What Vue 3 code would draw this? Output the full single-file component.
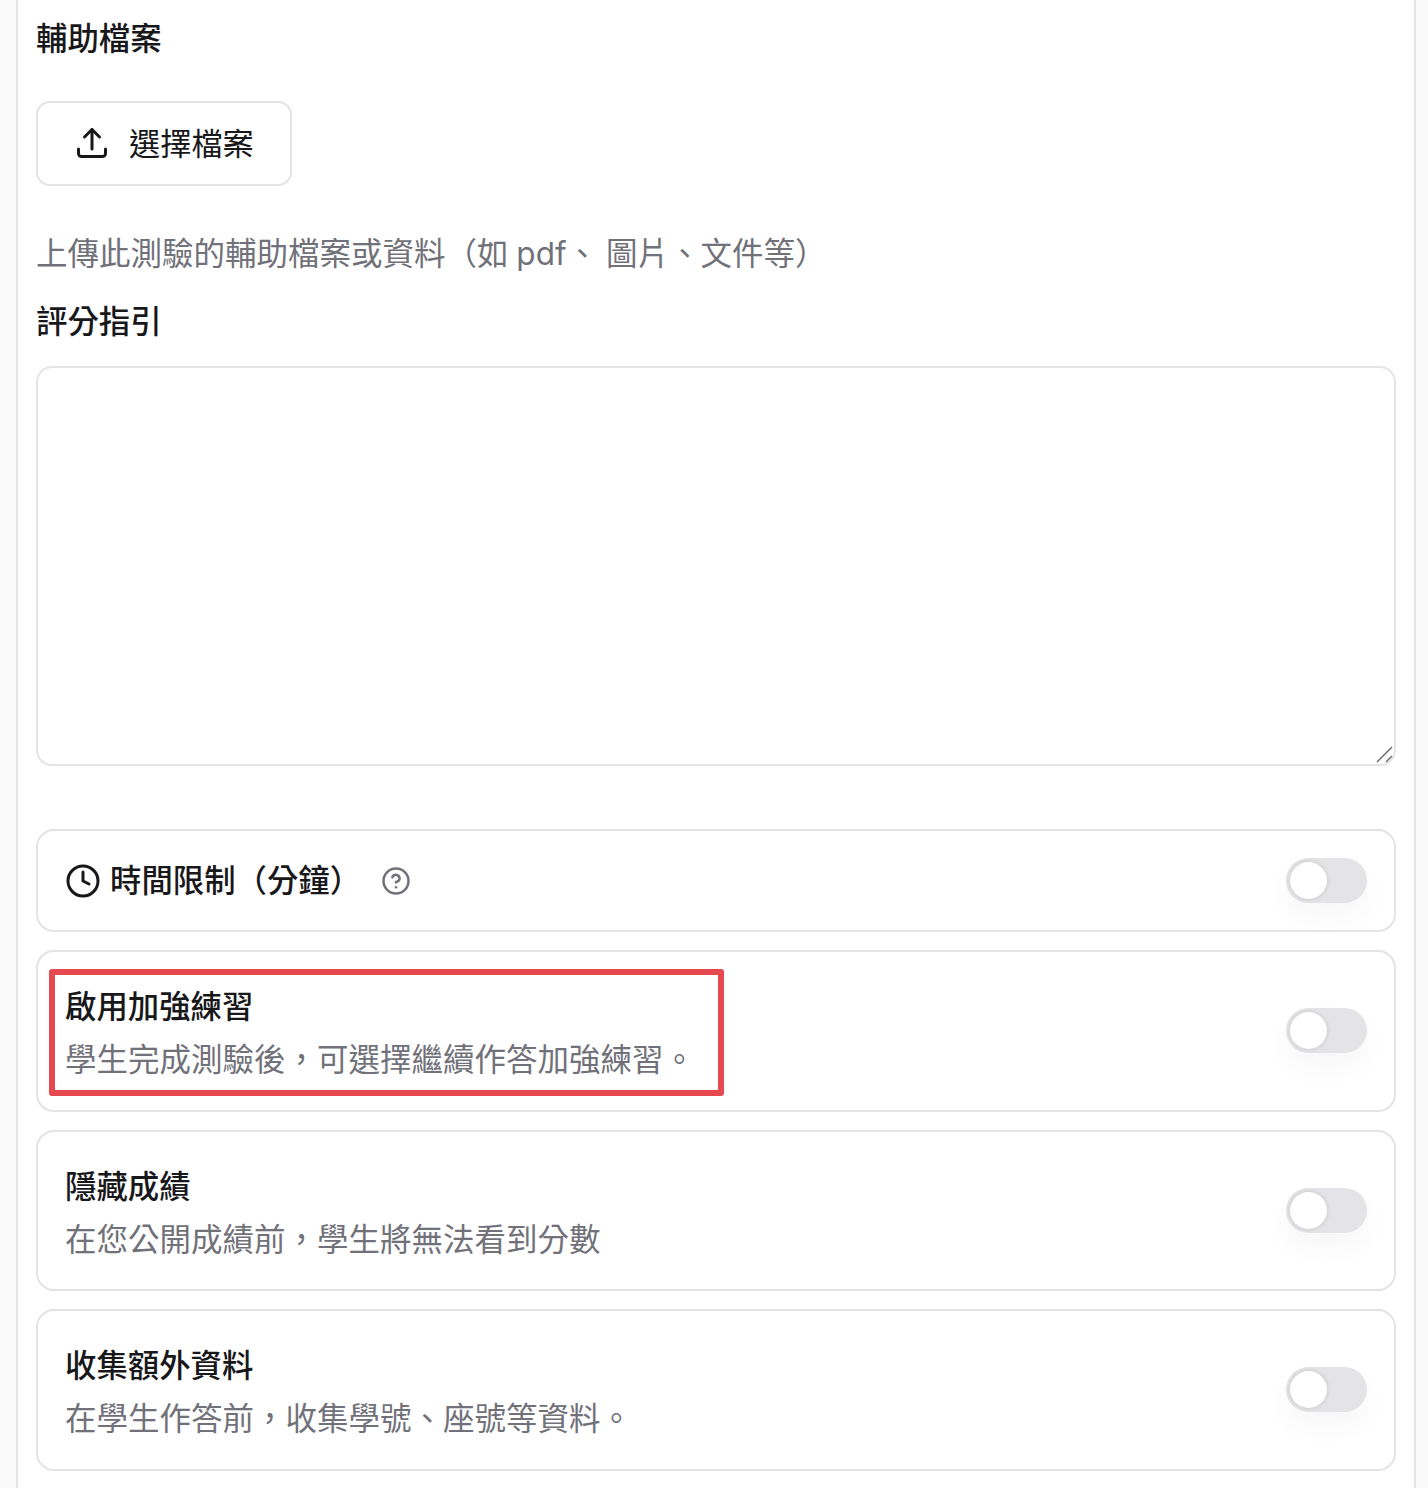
<template>
  <div class="page">
    <div class="panel">
      <h3 class="label first">輔助檔案</h3>
      <button class="upload">
        <svg width="36" height="36" viewBox="0 0 24 24" fill="none" stroke="#18181b" stroke-width="2" stroke-linecap="round" stroke-linejoin="round">
          <path d="M3 16v3a2 2 0 0 0 2 2h14a2 2 0 0 0 2-2v-3" />
          <path d="M12 16V3" />
          <path d="M7 8l5-5 5 5" />
        </svg>
        <span class="upload-text">選擇檔案</span>
      </button>
      <p class="hint">上傳此測驗的輔助檔案或資料（如 pdf、 圖片、文件等）</p>
      <h3 class="label grading">評分指引</h3>
      <div class="guide-wrap">
        <textarea class="guide"></textarea>
        <svg class="grip" width="18" height="18" viewBox="0 0 18 18" fill="none" stroke="#6b6b6b" stroke-width="1.5">
          <path d="M1 17L16 2" />
          <path d="M10 17l6-6" />
        </svg>
      </div>

      <div class="card time">
        <div class="time-title">
          <svg width="36" height="36" viewBox="0 0 24 24" fill="none" stroke="#18181b" stroke-width="2" stroke-linecap="round" stroke-linejoin="round">
            <circle cx="12" cy="12" r="10" />
            <path d="M12 6v6l4 2" />
          </svg>
          <span class="card-title">時間限制（分鐘）</span>
          <svg class="help" width="30" height="30" viewBox="0 0 24 24" fill="none" stroke="#71717a" stroke-width="2" stroke-linecap="round" stroke-linejoin="round">
            <circle cx="12" cy="12" r="10" />
            <path d="M9.1 9a3 3 0 0 1 5.8 1c0 2-3 3-3 3" />
            <path d="M12 17h.01" />
          </svg>
        </div>
        <span class="toggle"><span class="knob"></span></span>
      </div>

      <div v-for="item in options" :key="item.title" class="card option">
        <div class="option-text">
          <div class="card-title">{{ item.title }}</div>
          <div class="card-desc">{{ item.desc }}</div>
        </div>
        <span class="toggle"><span class="knob"></span></span>
      </div>

      <div class="highlight"></div>
    </div>
  </div>
</template>

<script setup>
const options = [
  { title: '啟用加強練習', desc: '學生完成測驗後，可選擇繼續作答加強練習。' },
  { title: '隱藏成績', desc: '在您公開成績前，學生將無法看到分數' },
  { title: '收集額外資料', desc: '在學生作答前，收集學號、座號等資料。' }
]
</script>

<style>
html,
body {
  margin: 0;
  background: #fafafa;
}
</style>

<style scoped>
.page {
  height: 1488px;
  overflow: hidden;
  padding: 0 12px 0 16px;
  box-sizing: border-box;
  font-family: "Inter", "Noto Sans CJK TC", sans-serif;
  color: #18181b;
}

.panel {
  position: relative;
  height: 100%;
  box-sizing: border-box;
  background: #fff;
  border-left: 2px solid #e4e4e7;
  border-right: 2px solid #e4e4e7;
  padding: 0 18px;
}

.label {
  margin: 0;
  font-size: 31.4px;
  line-height: 44px;
  font-weight: 500;
}

.first {
  padding-top: 17px;
}

.upload {
  display: flex;
  align-items: center;
  gap: 19px;
  width: 256px;
  height: 85px;
  margin-top: 40px;
  padding: 0 0 2px 36px;
  box-sizing: border-box;
  background: #fff;
  border: 2px solid #e4e4e7;
  border-radius: 14px;
  font-family: inherit;
  font-size: 31.2px;
  color: #18181b;
}

.upload-text {
  padding-bottom: 2px;
}

.hint {
  margin: 46px 0 0;
  font-size: 31.5px;
  line-height: 44px;
  word-spacing: -1px;
  color: #71717a;
}

.grading {
  margin-top: 24px;
}

.guide-wrap {
  position: relative;
  margin-top: 22px;
}

.guide {
  display: block;
  width: 100%;
  height: 400px;
  box-sizing: border-box;
  background: #fff;
  border: 2px solid #e4e4e7;
  border-radius: 16px;
  outline: none;
  resize: none;
}

.grip {
  position: absolute;
  right: 2px;
  bottom: 3px;
}

.card {
  display: flex;
  align-items: center;
  justify-content: space-between;
  box-sizing: border-box;
  padding: 0 27px;
  background: #fff;
  border: 2px solid #e4e4e7;
  border-radius: 18px;
}

.time {
  height: 103px;
  margin-top: 63px;
}

.time-title {
  display: flex;
  align-items: center;
  gap: 9px;
}

.help {
  margin-left: 11px;
}

.option {
  height: 161.5px;
  margin-top: 18px;
}

.option-text {
  padding-top: 6px;
}

.card-title {
  font-size: 31.4px;
  line-height: 44px;
  font-weight: 500;
}

.card-desc {
  margin-top: 9px;
  font-size: 31.5px;
  line-height: 44px;
  color: #71717a;
}

.toggle {
  display: block;
  flex: none;
  width: 81px;
  height: 45px;
  padding: 4px;
  box-sizing: border-box;
  border-radius: 23px;
  background: #e4e4e7;
  box-shadow: 0 14px 28px rgba(0, 0, 0, 0.035);
}

.knob {
  display: block;
  width: 37px;
  height: 37px;
  border-radius: 50%;
  background: #fff;
  box-shadow: 0 0 5px rgba(0, 0, 0, 0.14);
}

.highlight {
  position: absolute;
  left: 31px;
  top: 969px;
  width: 675px;
  height: 127px;
  box-sizing: border-box;
  border: 6px solid #e64a50;
  border-radius: 3px;
  pointer-events: none;
}
</style>
